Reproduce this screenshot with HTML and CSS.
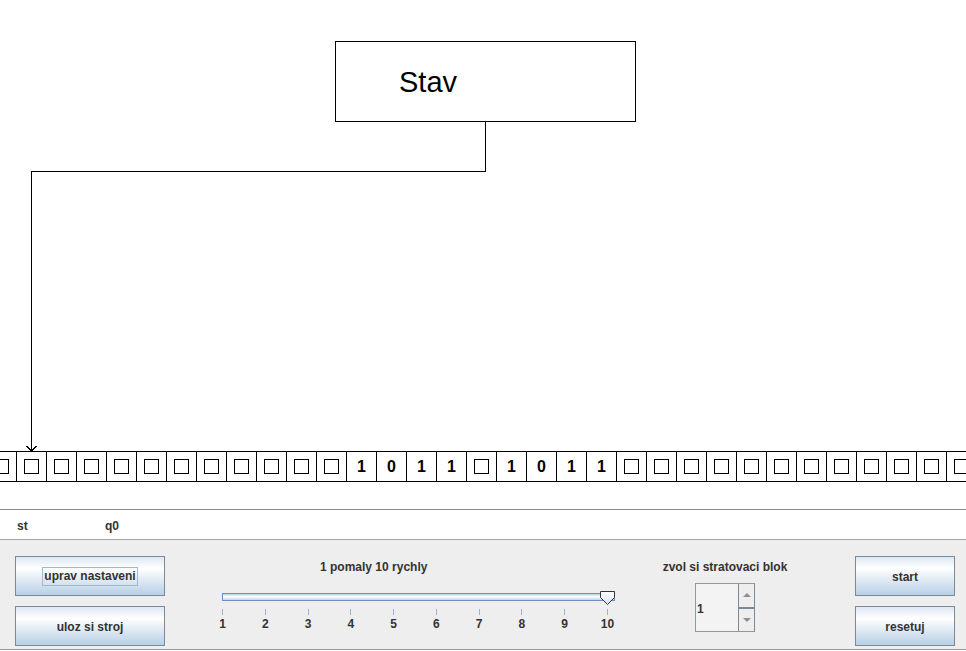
FILE: index.html
```html
<!DOCTYPE html>
<html>
<head>
<meta charset="utf-8">
<link rel="stylesheet" href="styles.css">
</head>
<body>
<div class="canvas">
  <div class="state-box">Stav</div>
  <svg class="wires" width="966" height="509" viewBox="0 0 966 509">
    <polyline points="485.5,121 485.5,171.5 31.5,171.5 31.5,451" fill="none" stroke="#000" stroke-width="1"/>
    <polyline points="26.5,446 31.5,451 36.5,446" fill="none" stroke="#000" stroke-width="1"/>
  </svg>
  <div class="tape">
    <div class="cell"><span class="blank"></span></div>
    <div class="cell"><span class="blank"></span></div>
    <div class="cell"><span class="blank"></span></div>
    <div class="cell"><span class="blank"></span></div>
    <div class="cell"><span class="blank"></span></div>
    <div class="cell"><span class="blank"></span></div>
    <div class="cell"><span class="blank"></span></div>
    <div class="cell"><span class="blank"></span></div>
    <div class="cell"><span class="blank"></span></div>
    <div class="cell"><span class="blank"></span></div>
    <div class="cell"><span class="blank"></span></div>
    <div class="cell"><span class="blank"></span></div>
    <div class="cell">1</div>
    <div class="cell">0</div>
    <div class="cell">1</div>
    <div class="cell">1</div>
    <div class="cell"><span class="blank"></span></div>
    <div class="cell">1</div>
    <div class="cell">0</div>
    <div class="cell">1</div>
    <div class="cell">1</div>
    <div class="cell"><span class="blank"></span></div>
    <div class="cell"><span class="blank"></span></div>
    <div class="cell"><span class="blank"></span></div>
    <div class="cell"><span class="blank"></span></div>
    <div class="cell"><span class="blank"></span></div>
    <div class="cell"><span class="blank"></span></div>
    <div class="cell"><span class="blank"></span></div>
    <div class="cell"><span class="blank"></span></div>
    <div class="cell"><span class="blank"></span></div>
    <div class="cell"><span class="blank"></span></div>
    <div class="cell"><span class="blank"></span></div>
    <div class="cell"><span class="blank"></span></div>
    <div class="cell"><span class="blank"></span></div>
  </div>
</div>
<div class="status">
  <span class="st-label">st</span>
  <span class="st-value">q0</span>
</div>
<div class="panel">
  <div class="col-left">
    <button class="btn"><span class="focus">uprav nastaveni</span></button>
    <button class="btn">uloz si stroj</button>
  </div>
  <div class="speed">
    <div class="speed-label">1 pomaly 10 rychly</div>
    <div class="track">
      <svg class="thumb" width="15" height="14" viewBox="0 0 15 14">
        <defs>
          <linearGradient id="tg" x1="0" y1="0" x2="0" y2="1">
            <stop offset="0" stop-color="#ffffff"/>
            <stop offset="1" stop-color="#d6e2ef"/>
          </linearGradient>
        </defs>
        <polygon points="0.5,0.5 14.5,0.5 14.5,6.5 7.5,13.5 0.5,6.5" fill="url(#tg)" stroke="#333" stroke-width="1"/>
      </svg>
    </div>
    <div class="ticks">
      <div class="tick"><i></i><span>1</span></div>
      <div class="tick"><i></i><span>2</span></div>
      <div class="tick"><i></i><span>3</span></div>
      <div class="tick"><i></i><span>4</span></div>
      <div class="tick"><i></i><span>5</span></div>
      <div class="tick"><i></i><span>6</span></div>
      <div class="tick"><i></i><span>7</span></div>
      <div class="tick"><i></i><span>8</span></div>
      <div class="tick"><i></i><span>9</span></div>
      <div class="tick"><i></i><span>10</span></div>
    </div>
  </div>
  <div class="spin-col">
    <div class="spin-label">zvol si stratovaci blok</div>
    <div class="spinner">
      <div class="spin-field">1</div>
      <div class="spin-btns">
        <div class="spin-btn"><span class="arr-up"></span></div>
        <div class="spin-btn"><span class="arr-down"></span></div>
      </div>
    </div>
  </div>
  <div class="col-right">
    <button class="btn">start</button>
    <button class="btn">resetuj</button>
  </div>
</div>
</body>
</html>
```

FILE: styles.css
```css
* { box-sizing: border-box; }
html, body {
  margin: 0;
  padding: 0;
  background: #ffffff;
  overflow: hidden;
  width: 966px;
  height: 651px;
  font-family: "Liberation Sans", Arial, sans-serif;
}
.canvas {
  position: relative;
  height: 509px;
  overflow: hidden;
}
.state-box {
  position: absolute;
  left: 335px;
  top: 41px;
  width: 301px;
  height: 81px;
  border: 1px solid #000;
  padding: 24px 0 0 63px;
  font-size: 29px;
  line-height: 33px;
  color: #000;
}
.wires {
  position: absolute;
  left: 0;
  top: 0;
  shape-rendering: crispEdges;
}
.tape {
  position: absolute;
  left: -14px;
  top: 451px;
  display: flex;
}
.cell {
  width: 30px;
  height: 31px;
  flex: none;
  border-left: 1px solid #000;
  border-top: 1px solid #000;
  border-bottom: 1px solid #000;
  display: flex;
  align-items: center;
  justify-content: center;
  font-size: 16px;
  font-weight: bold;
  color: #000;
}
.blank {
  width: 15px;
  height: 15px;
  border: 1px solid #000;
}
.status {
  height: 31px;
  border-top: 1px solid #8c8c8c;
  border-bottom: 1px solid #a4a4a4;
  display: flex;
  padding: 9px 0 0 17px;
  font-size: 12px;
  font-weight: bold;
  line-height: 14px;
  color: #333333;
}
.st-label { width: 88px; }
.panel {
  height: 110px;
  background: #eeeeee;
  border-bottom: 1px solid #9a9a9a;
  display: flex;
  align-items: flex-start;
  padding: 16px 11px 0 15px;
  font-size: 12px;
  font-weight: bold;
  line-height: 14px;
  color: #333333;
}
.col-left, .col-right {
  display: flex;
  flex-direction: column;
  gap: 10px;
}
.col-left { width: 150px; }
.col-right { width: 100px; margin-left: auto; }
.btn {
  height: 40px;
  width: 100%;
  border: 1px solid #7a8a99;
  background: linear-gradient(#dde8f3 0%, #ffffff 30%, #b8cfe5 100%);
  font-family: "Liberation Sans", Arial, sans-serif;
  font-size: 12px;
  font-weight: bold;
  color: #333333;
  padding: 1px 0 0 0;
  line-height: 14px;
}
.focus {
  display: inline-block;
  border: 1px solid #a3b8cc;
  padding: 1px 1px 2px 1px;
}
.speed {
  width: 430px;
  margin-left: 35px;
}
.speed-label {
  margin: 4px 0 0 120px;
}
.track {
  position: relative;
  margin: 19px 0 0 22px;
  width: 393px;
  height: 8px;
  border: 1px solid #6b8fc9;
  background: linear-gradient(#b8cde8 0%, #ffffff 45%, #c3d4ea 100%);
}
.thumb {
  position: absolute;
  left: 377px;
  top: -3px;
}
.ticks {
  margin: 8px 0 0 22px;
  width: 386px;
  display: flex;
  justify-content: space-between;
}
.tick {
  width: 1px;
  display: flex;
  flex-direction: column;
  align-items: center;
}
.tick i {
  display: block;
  width: 1px;
  height: 6px;
  background: #9fb3c8;
}
.tick span {
  margin-top: 2px;
  white-space: nowrap;
  color: #333333;
}
.spin-col {
  width: 150px;
  margin-left: 20px;
  display: flex;
  flex-direction: column;
  align-items: center;
}
.spin-label {
  margin-top: 4px;
  white-space: nowrap;
}
.spinner {
  margin-top: 9px;
  width: 60px;
  height: 49px;
  display: flex;
  border: 1px solid #8a9aa8;
  border-right-color: #7a8a99;
  background: #f3f3f3;
}
.spin-field {
  flex: 1;
  display: flex;
  align-items: center;
  padding: 2px 0 0 1px;
  color: #333333;
}
.spin-btns {
  width: 16px;
  display: flex;
  flex-direction: column;
  border-left: 1px solid #7a8a99;
}
.spin-btn {
  flex: 1;
  display: flex;
  align-items: center;
  justify-content: center;
  background: #eeeeee;
}
.spin-btn + .spin-btn {
  border-top: 2px solid #7a8a99;
}
.arr-up {
  width: 0;
  height: 0;
  border-left: 4px solid transparent;
  border-right: 4px solid transparent;
  border-bottom: 4px solid #8e8e8e;
}
.arr-down {
  width: 0;
  height: 0;
  border-left: 4px solid transparent;
  border-right: 4px solid transparent;
  border-top: 4px solid #8e8e8e;
}
```
